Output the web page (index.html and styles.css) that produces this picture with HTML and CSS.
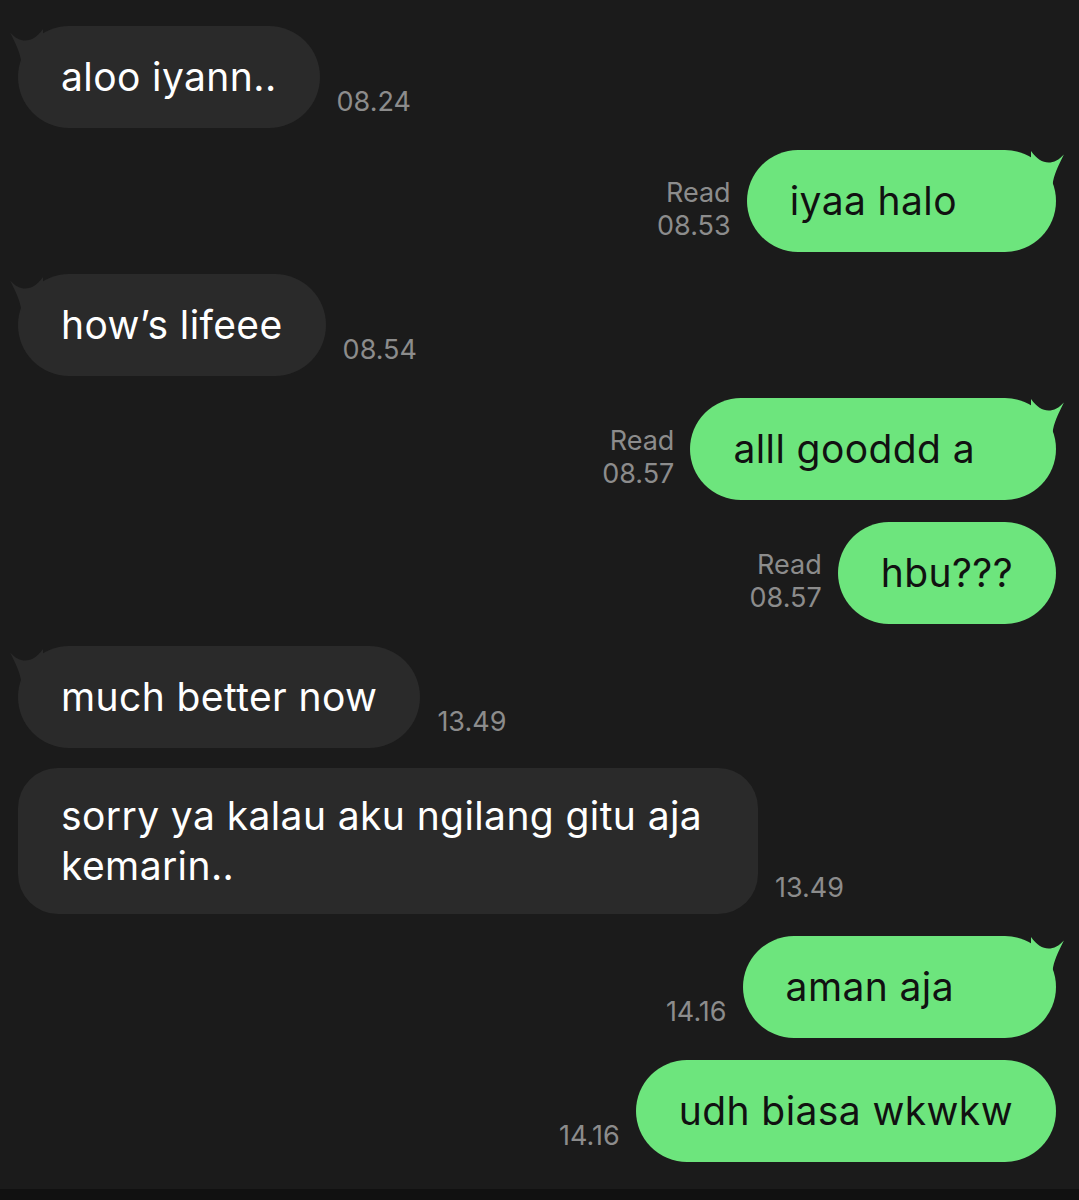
FILE: index.html
```html
<!DOCTYPE html>
<html>
  <head>
    <title>Chat</title>
    <link rel="stylesheet" href="styles.css">
  </head>
  <body>
    <div class="chat">
      <div class="row in">
        <div class="bubble tail">aloo iyann..</div>
        <div class="meta">08.24</div>
      </div>

      <div class="row out">
        <div class="meta">Read<br />08.53</div>
        <div class="bubble tail">iyaa halo<span class="redact r1"></span></div>
      </div>

      <div class="row in">
        <div class="bubble tail">how’s lifeee</div>
        <div class="meta">08.54</div>
      </div>

      <div class="row out">
        <div class="meta">Read<br />08.57</div>
        <div class="bubble tail">alll gooddd a<span class="redact r2"></span></div>
      </div>

      <div class="row out">
        <div class="meta">Read<br />08.57</div>
        <div class="bubble">hbu???</div>
      </div>

      <div class="row in">
        <div class="bubble tail">much better now</div>
        <div class="meta">13.49</div>
      </div>

      <div class="row in tight">
        <div class="bubble multi">sorry ya kalau aku ngilang gitu aja kemarin..</div>
        <div class="meta">13.49</div>
      </div>

      <div class="row out">
        <div class="meta">14.16</div>
        <div class="bubble tail">aman aja<span class="redact r3"></span></div>
      </div>

      <div class="row out">
        <div class="meta">14.16</div>
        <div class="bubble">udh biasa wkwkw</div>
      </div>
    </div>
    <div class="bottom"></div>

    <script>
      // add the little curled tail to the first bubble of a group
      const tailSvg =
        '<svg class="tail-svg" width="34" height="34" viewBox="0 0 30 30">' +
        '<path d="M0 0 C9 13 20 13 29 3 C24 13 20 21 19 30 L0 30 Z" /></svg>';
      for (const bubble of document.querySelectorAll(".bubble.tail")) {
        bubble.insertAdjacentHTML("beforeend", tailSvg);
      }
    </script>
  </body>
</html>
```

FILE: styles.css
```css
html,
body {
  margin: 0;
  background-color: #1b1b1b;
}
body {
  font-family: Inter, "Noto Sans", sans-serif;
  height: 1200px;
  position: relative;
  overflow: hidden;
}
.chat {
  padding: 26px 23px 0 18px;
  display: flex;
  flex-direction: column;
  gap: 22px;
}
.row {
  display: flex;
  align-items: flex-end;
  gap: 17px;
}
.row.tight {
  margin-top: -2px;
}
.row.out {
  justify-content: flex-end;
  gap: 16px;
}
.bubble {
  position: relative;
  box-sizing: border-box;
  min-height: 102px;
  padding: 0 43px;
  border-radius: 51px;
  display: flex;
  align-items: center;
  font-size: 39px;
  letter-spacing: 0.4px;
  line-height: 50px;
  color: #fff;
  background-color: #2a2a2a;
}
.bubble.multi {
  width: 740px;
  padding: 23px 43px;
  border-radius: 40px;
}
.out .bubble {
  color: #111;
  background-color: #6de57d;
}
.tail-svg {
  position: absolute;
  top: 3px;
  fill: #2a2a2a;
}
.in .tail-svg {
  left: -9px;
  transform: scaleX(-1);
}
.out .tail-svg {
  right: -9px;
  top: 1px;
  fill: #6de57d;
}
.redact {
  display: inline-block;
  height: 40px;
}
.redact.r1 {
  width: 56px;
}
.redact.r2 {
  width: 38px;
}
.redact.r3 {
  width: 59px;
}
.meta {
  font-size: 27px;
  line-height: 33px;
  color: #8c8c8c;
  text-align: right;
  margin-bottom: 10px;
}
.bottom {
  position: absolute;
  left: 0;
  right: 0;
  bottom: 0;
  height: 11px;
  background-color: #111;
}
```
